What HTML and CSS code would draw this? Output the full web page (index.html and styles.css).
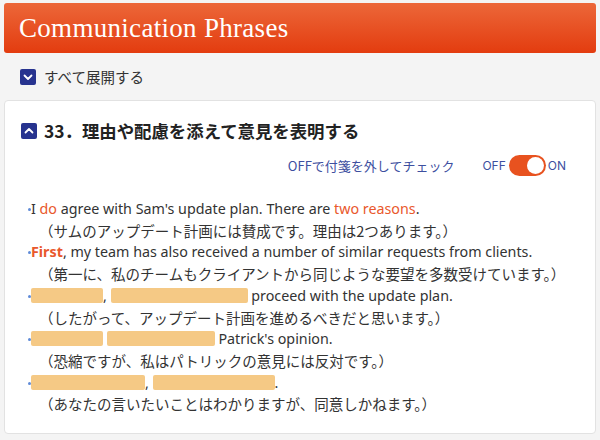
FILE: index.html
```html
<!DOCTYPE html>
<html lang="ja">
<head>
    <meta charset="UTF-8">
    <meta name="viewport" content="width=device-width, initial-scale=1.0">
    <title>Communication Phrases</title>
    <link rel="stylesheet" href="styles.css">
</head>
<body>
    <div class="page-header">
        <h1>Communication Phrases</h1>
    </div>

    <div class="expand-all">
        <span class="box-icon">
            <svg width="16" height="16" viewBox="0 0 16 16"><path d="M4.5 6.5 L8 10 L11.5 6.5" fill="none" stroke="#fff" stroke-width="1.8" stroke-linecap="round" stroke-linejoin="round"/></svg>
        </span>
        <span>すべて展開する</span>
    </div>

    <div class="card">
        <div class="card-title">
            <span class="box-icon">
                <svg width="16" height="16" viewBox="0 0 16 16"><path d="M4.5 9.5 L8 6 L11.5 9.5" fill="none" stroke="#fff" stroke-width="1.8" stroke-linecap="round" stroke-linejoin="round"/></svg>
            </span>
            <h2>33．理由や配慮を添えて意見を表明する</h2>
        </div>

        <div class="switch-row">
            <span class="switch-note">OFFで付箋を外してチェック</span>
            <span class="switch-label">OFF</span>
            <span class="switch on"><span class="knob"></span></span>
            <span class="switch-label">ON</span>
        </div>

        <ul class="phrases">
            <li>
                <p class="en">I <span class="hl">do</span> agree with Sam's update plan. There are <span class="hl">two reasons</span>.</p>
                <p class="ja">（サムのアップデート計画には賛成です。理由は2つあります。）</p>
            </li>
            <li>
                <p class="en"><b class="hl">First</b>, my team has also received a number of similar requests from clients.</p>
                <p class="ja">（第一に、私のチームもクライアントから同じような要望を多数受けています。）</p>
            </li>
            <li>
                <p class="en"><span class="blank" style="width:72px"></span>, <span class="blank" style="width:137px"></span> proceed with the update plan.</p>
                <p class="ja">（したがって、アップデート計画を進めるべきだと思います。）</p>
            </li>
            <li>
                <p class="en"><span class="blank" style="width:72px"></span> <span class="blank" style="width:108px"></span> Patrick's opinion.</p>
                <p class="ja">（恐縮ですが、私はパトリックの意見には反対です。）</p>
            </li>
            <li>
                <p class="en"><span class="blank" style="width:114px"></span>, <span class="blank" style="width:122px"></span>.</p>
                <p class="ja">（あなたの言いたいことはわかりますが、同意しかねます。）</p>
            </li>
        </ul>
    </div>
</body>
</html>
```

FILE: styles.css
```css
body {
    margin: 0;
    padding: 3px 4px 0;
    background-color: #f4f4f4;
    font-family: "Noto Sans CJK JP", "Noto Sans", sans-serif;
    color: #333;
}
.page-header {
    height: 50px;
    display: flex;
    align-items: center;
    padding-left: 15px;
    border-radius: 3px;
    background: linear-gradient(to bottom, #ec6739, #e33c0f);
}
.page-header h1 {
    margin: 0;
    font-family: "Liberation Serif", serif;
    font-weight: normal;
    font-size: 27px;
    color: #fff;
    letter-spacing: 0.3px;
}
.expand-all {
    display: flex;
    align-items: center;
    gap: 8px;
    height: 47px;
    padding-left: 16px;
    font-size: 14.5px;
    color: #333;
}
.box-icon {
    width: 16px;
    height: 16px;
    border-radius: 2px;
    background-color: #27338f;
    display: flex;
}
.card {
    background: white;
    border: 1px solid #e2e2e2;
    border-radius: 4px;
    margin-bottom: 4px;
    padding: 17px 16px 18px;
}
.card-title {
    display: flex;
    align-items: center;
    gap: 7px;
}
.card-title h2 {
    margin: 0;
    font-size: 17.4px;
    font-weight: bold;
    color: #222;
}
.switch-row {
    display: flex;
    align-items: center;
    justify-content: flex-end;
    margin-top: 12px;
    padding-right: 13px;
    font-family: "Noto Sans CJK JP", sans-serif;
    font-size: 12px;
    color: #3d4f9f;
}
.switch-note {
    margin-right: 28px;
    font-size: 13px;
}
.switch-label {
    font-family: "Inter", sans-serif;
    font-size: 12px;
}
.switch {
    width: 37px;
    height: 21px;
    border-radius: 11px;
    background-color: #e8521f;
    margin: 0 2px 0 3px;
    display: flex;
    align-items: center;
    justify-content: flex-end;
    padding: 0 2px;
    box-sizing: border-box;
}
.knob {
    width: 17px;
    height: 17px;
    border-radius: 50%;
    background: white;
}
.phrases {
    list-style: none;
    margin: 22px 0 0;
    padding: 0;
}
.phrases p {
    margin: 0;
    line-height: 21.7px;
}
.en {
    position: relative;
    padding-left: 10px;
    font-family: "Noto Sans", sans-serif;
    font-size: 14.3px;
    color: #333;
}
.en::before {
    content: "";
    position: absolute;
    left: 7px;
    top: 10px;
    width: 3px;
    height: 3px;
    border-radius: 50%;
    background-color: #5f8bd8;
}
.ja {
    padding-left: 18px;
    font-size: 14.5px;
    color: #333;
}
.hl {
    color: #e9582c;
}
.blank {
    display: inline-block;
    height: 15px;
    vertical-align: -2px;
    border-radius: 2px;
    background-color: #f5c985;
}
```
